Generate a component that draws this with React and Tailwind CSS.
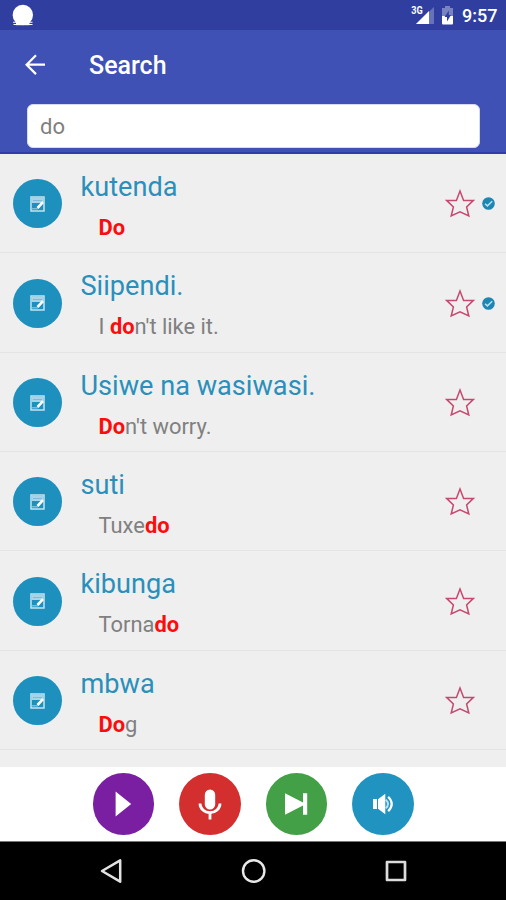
const rows = [
  { word: 'kutenda', parts: ['', 'Do', ''], checked: true },
  { word: 'Siipendi.', parts: ['I ', 'do', "n't like it."], checked: true },
  { word: 'Usiwe na wasiwasi.', parts: ['', 'Do', "n't worry."] },
  { word: 'suti', parts: ['Tuxe', 'do', ''] },
  { word: 'kibunga', parts: ['Torna', 'do', ''] },
  { word: 'mbwa', parts: ['', 'Do', 'g'] },
];

function StatusBar() {
  return (
    <div className="flex h-[30px] shrink-0 items-start bg-[#303f9f] pl-[11px] pr-[9px]">
      <svg className="mt-[4px]" width="24" height="23" viewBox="0 0 24 23" fill="#fff">
        <circle cx="11.8" cy="11" r="10.2" />
        <path d="M2 17.8h3v1H2zM18.5 17.8h3v1h-3zM2.5 20h19v1h-19z" />
        <path d="M5 17h13.5v4.2H5z" />
      </svg>
      <div className="ml-auto flex">
        <svg width="24" height="30" viewBox="0 0 24 30">
          <path d="M23 7v17H5z" fill="#6672ba" />
          <path d="M18 11v13H5z" fill="#fff" />
          <text x="0.3" y="14" fontSize="10" fontWeight="700" fill="#fff" fontFamily="Roboto, sans-serif" textLength="11.5" lengthAdjust="spacingAndGlyphs">3G</text>
        </svg>
        <svg className="ml-[6px]" width="13" height="30" viewBox="0 0 13 30">
          <path d="M1 8h3V6h5v2h3v8H1z" fill="#7983c2" />
          <path d="M1 16h11v7.5q0 1-1 1H2q-1 0-1-1z" fill="#fff" />
          <path d="M7.8 10.5 3.5 17H6v4.5L10 15H7.8z" fill="#303f9f" />
        </svg>
      </div>
      <span className="ml-[8px] w-[35px] whitespace-nowrap text-[18px] leading-[32px] font-medium text-white">9:57</span>
    </div>
  );
}

function NoteIcon() {
  return (
    <svg width="15" height="16" viewBox="0 0 15 16" fill="none">
      <path d="M1 1h13v14H1z" stroke="#c3e3f0" strokeWidth="1.5" />
      <path d="M1.5 1.5h12V7h-12z" fill="#a9d3e6" />
      <path d="M3 4.5h9" stroke="#7dbbd8" strokeWidth="1" />
      <path d="M7.5 12 13 6.2" stroke="#fff" strokeWidth="2.6" />
      <path d="M2 12.8h6" stroke="#8cc8e0" strokeWidth="1.2" />
    </svg>
  );
}

function Row({ word, parts, checked }) {
  return (
    <div className="flex h-[99.4px] shrink-0 border-b border-[#e4e4e4] pl-[13px]">
      <div className="mt-[25.5px] flex size-[49px] shrink-0 items-center justify-center rounded-full bg-[#1e90be]">
        <NoteIcon />
      </div>
      <div className="ml-[18.5px] mt-[17px] grow whitespace-nowrap">
        <div className="text-[27.15px] leading-[32px] text-[#2a8fbb]">{word}</div>
        <div className="ml-[18px] mt-[11px] whitespace-pre text-[21.9px] leading-[28px] text-[#808080]">
          {parts[0]}
          <b className="font-bold text-[#fb0d0d]">{parts[1]}</b>
          {parts[2]}
        </div>
      </div>
      <svg className="mt-[35.5px]" width="30" height="30" viewBox="0 0 30 30" fill="none">
        <path d="M15 2 18.6 11.4H28.4L21.6 18 23.8 27 15 22.8 6.2 27 8.4 18 1.6 11.4H11.4Z" stroke="#c6496f" strokeWidth="1.5" />
      </svg>
      <div className="ml-[6px] mr-[10px] mt-[42.5px] w-[15px]">
        {checked && (
          <svg width="15" height="15" viewBox="0 0 15 15" fill="none">
            <circle cx="7.5" cy="7.5" r="6.3" fill="#1c87b3" />
            <path d="m4 7.7 2.4 2.2 4.8-4.6" stroke="#b8dfef" strokeWidth="1.5" />
          </svg>
        )}
      </div>
    </div>
  );
}

export default function App() {
  return (
    <div className="flex h-[900px] w-[506px] flex-col overflow-hidden bg-[#efefef] font-['Roboto',sans-serif]">
      <StatusBar />
      <header className="flex h-[123.8px] shrink-0 flex-col border-b-2 border-[#2f3fa9] bg-[#3f51b5]">
        <div className="flex h-[74.4px] items-start pl-[24px]">
          <svg className="mt-[23px]" width="23" height="24" viewBox="0 0 23 24" fill="none" stroke="#fff" strokeWidth="2.2">
            <path d="M21 11.7H3M12 2.3 2.6 11.7 12 21.1" />
          </svg>
          <h1 className="ml-[42px] mt-[20px] text-[25px] leading-[32px] font-medium text-white">Search</h1>
        </div>
        <div className="ml-[27px] flex h-[44px] w-[453px] items-center rounded-[6px] border border-[#d5daf5] bg-white pl-[12px] pt-[1px] text-[22px] text-[#808080]">do</div>
      </header>
      <main className="flex h-[613.2px] shrink-0 flex-col overflow-hidden">
        {rows.map((r) => <Row key={r.word} {...r} />)}
      </main>
      <div className="flex h-[75px] shrink-0 items-center justify-center gap-[25px] border-b border-[#777] bg-white">
        <div className="flex size-[61.5px] items-center justify-center rounded-full bg-[#7b1fa2]">
          <svg width="30" height="30" viewBox="0 0 30 30" fill="#fff"><path d="M7.6 2.4 23.2 15 7.6 27.6z" /></svg>
        </div>
        <div className="flex size-[61.5px] items-center justify-center rounded-full bg-[#d32f2f]">
          <svg width="30" height="34" viewBox="0 0 30 34" fill="none">
            <rect x="9.8" y="2.5" width="10.4" height="20" rx="5.2" fill="#fff" />
            <path d="M5 16.5a10 9.2 0 0 0 20 0M15 25.5v7" stroke="#fff" strokeWidth="2.8" />
          </svg>
        </div>
        <div className="flex size-[61.5px] items-center justify-center rounded-full bg-[#43a047]">
          <svg width="26" height="26" viewBox="0 0 26 26" fill="#fff"><path d="M2 2.2 20 11.5V2.2h4.2V23.8H20V14.5L2 23.8z" /></svg>
        </div>
        <div className="flex size-[61.5px] items-center justify-center rounded-full bg-[#2093c0]">
          <svg width="24" height="24" viewBox="0 0 24 24" fill="none">
            <path d="M2 7h4v10H2zM7 7.2 14.3 1.8v20.4L7 16.8z" fill="#fff" />
            <path d="M14.8 7.6q4.4 4.4 0 8.8" stroke="#bfe3f1" strokeWidth="2" />
            <path d="M17.2 4.8q7 7.2 0 14.4" stroke="#fff" strokeWidth="2.2" />
          </svg>
        </div>
      </div>
      <nav className="flex h-[58px] shrink-0 items-center bg-black pl-[98px]">
        <svg width="26" height="26" viewBox="0 0 26 26" fill="none" stroke="#e2e2e2" strokeWidth="2.5" strokeLinejoin="round"><path d="M22.2 2.3v21.4L4 13z" /></svg>
        <svg className="ml-[117px]" width="26" height="26" viewBox="0 0 26 26" fill="none" stroke="#e8e8e8" strokeWidth="2.4"><circle cx="12.7" cy="13" r="10.7" /></svg>
        <svg className="ml-[116px]" width="26" height="26" viewBox="0 0 26 26" fill="none" stroke="#dcdcdc" strokeWidth="2.7" strokeLinejoin="round"><path d="M4 4h18v18H4z" /></svg>
      </nav>
    </div>
  );
}
